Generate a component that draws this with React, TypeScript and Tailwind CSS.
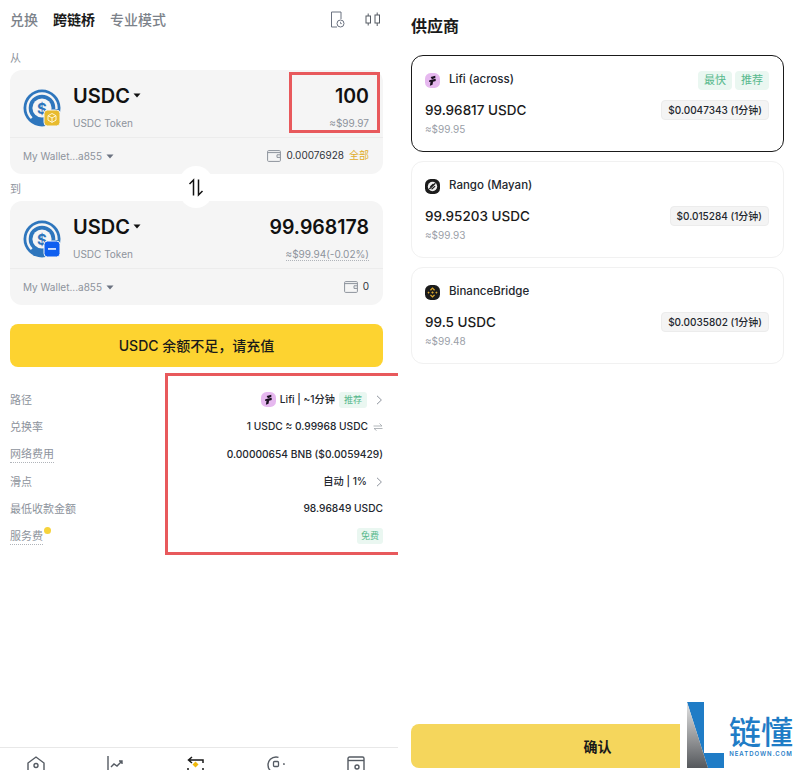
import React from "react";

const font = { fontFamily: '"Inter","Noto Sans CJK SC",sans-serif' };

function Usdc({ kind }: { kind: "bnb" | "base" }) {
  return (
    <svg width="40" height="40" viewBox="0 0 40 40" className="shrink-0">
      <circle cx="19" cy="19" r="18.5" fill="#2e76bd" />
      <circle cx="19" cy="19" r="14.5" fill="none" stroke="#f5f5f5" strokeWidth="2.4" strokeDasharray="58 33" strokeDashoffset="-34" />
      <circle cx="19" cy="19" r="9.6" fill="#f5f5f5" />
      <text x="19" y="24.5" textAnchor="middle" fontSize="15" fontWeight="700" fill="#2e76bd" fontFamily="Inter">$</text>
      {kind === "bnb" ? (
        <g>
          <rect x="21" y="21" width="16" height="16" rx="3.5" fill="#e8bb2e" stroke="#f5f5f5" strokeWidth="1" />
          <path d="M29 24.5l4 2.2v4.4l-4 2.3-4-2.3v-4.4zM25 26.7l4 2.2 4-2.2M29 28.9v4.5" fill="none" stroke="#fff6d6" strokeWidth="1" />
        </g>
      ) : (
        <g>
          <rect x="21" y="21" width="16" height="16" rx="3.5" fill="#0f5ff0" stroke="#f5f5f5" strokeWidth="1" />
          <rect x="25" y="28.2" width="8" height="1.5" fill="#fff" />
        </g>
      )}
    </svg>
  );
}

function Wallet() {
  return (
    <svg width="14" height="12" viewBox="0 0 14 12" className="shrink-0">
      <rect x="0.6" y="0.6" width="12.8" height="10.8" rx="1" fill="none" stroke="#8d939c" strokeWidth="1" />
      <path d="M0.6 2.6h12.8M13.4 4.8h-3.4v2.6h3.4" fill="none" stroke="#8d939c" strokeWidth="1" />
    </svg>
  );
}

function Caret({ size = "small" }: { size?: "small" | "big" }) {
  return size === "big" ? (
    <svg width="8" height="5" viewBox="0 0 8 5" className="ml-[3px] mb-0.5"><path d="M0.5 0.5h7L4 4.5z" fill="#111" /></svg>
  ) : (
    <svg width="8" height="5" viewBox="0 0 8 5" className="ml-1"><path d="M0.5 0.5h7L4 4.5z" fill="#6b7280" /></svg>
  );
}

function Lifi({ size = 15 }: { size?: number }) {
  return (
    <svg width={size} height={size} viewBox="0 0 16 16" className="shrink-0">
      <rect width="16" height="16" rx="6" fill="#e6b8ef" />
      <path d="M6 4.2l5-1.4v2.6L7.4 6.6zM4.6 7.6L11.4 6v2.4L8.6 9.3 8 12.6l-2.8.9.7-4.3-1.6.4z" fill="#1a1020" />
    </svg>
  );
}

function Rango() {
  return (
    <svg width="15" height="15" viewBox="0 0 16 16" className="shrink-0">
      <rect width="16" height="16" rx="6" fill="#1b1b1b" />
      <circle cx="8" cy="8" r="5" fill="#eee" />
      <path d="M4.600 10.600L11 4.600M5.600 8.400L9 5.300M7 11l3.800-3.400" stroke="#1b1b1b" strokeWidth="1.300" />
    </svg>
  );
}

function Binance() {
  return (
    <svg width="15" height="15" viewBox="0 0 16 16" className="shrink-0">
      <rect width="16" height="16" rx="6" fill="#1b1b1b" />
      <path d="M8 2.300l2.700 2.700-1 1L8 4.300 6.300 6l-1-1zM2.600 8l1.200-1.200L5 8 3.800 9.200zM11 8l1.200-1.200L13.400 8l-1.200 1.200zM8 13.700L5.300 11l1-1L8 11.700 9.700 10l1 1zM6.600 8L8 6.600 9.400 8 8 9.400z" fill="#d9a62e" />
    </svg>
  );
}

function Chevron() {
  return (
    <svg width="7" height="10" viewBox="0 0 7 10" className="shrink-0 ml-[9px]">
      <path d="M1 0.8L5.400 5 1 9.200" fill="none" stroke="#8d939c" strokeWidth="1" />
    </svg>
  );
}

function TokenCard({ kind, amount, fiat, balance, all, dashed }: { kind: "bnb" | "base"; amount: string; fiat: string; balance: string; all?: boolean; dashed?: boolean }) {
  return (
    <div className="h-[104px] bg-[#f5f5f5] rounded-xl flex flex-col">
      <div className="h-[68px] border-b border-[#ececec] flex items-start pl-[13px] pr-[14px]">
        <div className="mt-[19px]"><Usdc kind={kind} /></div>
        <div className="ml-[10px] mt-[14px]">
          <div className="flex items-center h-[24px] text-[20px] leading-[24px] font-semibold text-[#111]">USDC<Caret size="big" /></div>
          <div className="mt-[8px] text-[10px] leading-[14px] text-[#8d939c]">USDC Token</div>
        </div>
        <div className="ml-auto mt-[14px] text-right">
          <div className="h-[24px] text-[19.500px] leading-[24px] font-semibold text-[#111]">{amount}</div>
          <div className="mt-[8px] text-[10px] leading-[14px] text-[#8d939c]">
            {dashed ? <span className="border-b border-dotted border-[#b0b4ba]">{fiat}</span> : fiat}
          </div>
        </div>
      </div>
      <div className="flex-1 flex items-center pl-[13px] pr-[14px]">
        <div className="flex items-center text-[10px] text-[#8d939c] mt-[1px]">My Wallet...a855<Caret /></div>
        <div className="ml-auto flex items-center gap-[5px] text-[10px] text-[#30343a] -mt-[1px]">
          <Wallet />
          <span>{balance}</span>
          {all && <span className="text-[#e0ad2b]">全部</span>}
        </div>
      </div>
    </div>
  );
}

function Row({ label, dotted, dot, children }: { label: string; dotted?: boolean; dot?: boolean; children: React.ReactNode }) {
  return (
    <div className="h-[27.3px] flex items-center justify-between">
      <div className="relative text-[11px] leading-[14px] text-[#8d939c]">
        <span className={dotted ? "border-b border-dotted border-[#b0b4ba] pb-[1px]" : ""}>{label}</span>
        {dot && <span className="absolute -right-[8px] -top-[2px] w-[7px] h-[7px] rounded-full bg-[#f6d33c]" />}
      </div>
      <div className="flex items-center text-[10.200px] font-medium text-[#23272e]">{children}</div>
    </div>
  );
}

function Tag({ children }: { children: React.ReactNode }) {
  return <span className="h-[19px] px-[6px] rounded-[4px] bg-[#eaf7f1] text-[#58b98d] text-[11px] leading-[19px]">{children}</span>;
}

function Provider({ logo, name, amount, fiat, fee, tags, active }: { logo: React.ReactNode; name: string; amount: string; fiat: string; fee: string; tags?: boolean; active?: boolean }) {
  return (
    <div className={`h-[96.500px] rounded-xl pl-[13px] pr-[14px] pt-[14px] ${active ? "border-[1.5px] border-[#1a1a1a]" : "border border-[#f1f1f1]"}`}>
      <div className="h-[20px] flex items-center">
        {logo}
        <span className="ml-[9px] text-[11.500px] font-medium text-[#23272e]">{name}</span>
        {tags && <div className="ml-auto flex gap-[3px]"><Tag>最快</Tag><Tag>推荐</Tag></div>}
      </div>
      <div className="mt-[10px] h-[20px] flex items-center justify-between">
        <span className="text-[13.500px] font-medium text-[#1a1a1a]">{amount}</span>
        <span className="h-[20px] px-[6px] rounded-[4px] bg-[#f4f4f4] border border-[#ececec] text-[10px] leading-[18px] font-medium text-[#23272e]">{fee}</span>
      </div>
      <div className="mt-[2px] text-[10px] leading-[14px] text-[#9aa0a8]">{fiat}</div>
    </div>
  );
}

function Nav() {
  const c = "#555b63";
  return (
    <div className="mt-auto h-[23px] border-t border-[#e8e8e8] flex justify-between pl-[27px] pr-[33px] pt-[8px] overflow-hidden">
      <svg width="18" height="22" viewBox="0 0 18 22"><path d="M1 7l8-6 8 6v13H1z" fill="none" stroke={c} strokeWidth="1.400" /><circle cx="9" cy="9.500" r="2" fill="none" stroke={c} strokeWidth="1.400" /></svg>
      <svg width="18" height="22" viewBox="0 0 18 22"><path d="M1 0v20M4 11l3-3 3 2 5-5M12 5h3v3" fill="none" stroke={c} strokeWidth="1.400" /></svg>
      <svg width="18" height="22" viewBox="0 0 18 22"><path d="M5 1L1.500 4 5 7M2 4h14v3M13 20h-11v-3" fill="none" stroke="#1a1a1a" strokeWidth="1.500" /><path d="M8.500 5.500l3 3-3 3-3-3z" fill="#f0b90b" /><path d="M1 12v3M16 12v3" stroke="#1a1a1a" strokeWidth="1.500" /></svg>
      <svg width="18" height="22" viewBox="0 0 18 22"><circle cx="9" cy="9" r="8" fill="none" stroke={c} strokeWidth="1.400" strokeDasharray="34 8" strokeDashoffset="-6" /><rect x="6.500" y="5.500" width="5" height="5" rx="1" fill="none" stroke={c} strokeWidth="1.300" /></svg>
      <svg width="18" height="22" viewBox="0 0 18 22"><rect x="1" y="1" width="16" height="20" rx="1.500" fill="none" stroke={c} strokeWidth="1.400" /><path d="M1 4.500h16" stroke={c} strokeWidth="1.400" /><circle cx="10" cy="11" r="2" fill="none" stroke={c} strokeWidth="1.400" /></svg>
    </div>
  );
}

export default function App() {
  return (
    <div className="relative w-[800px] h-[770px] overflow-hidden bg-white flex" style={font}>
      <div className="relative w-[398px] h-[770px] flex flex-col">
        <div className="pl-[10px] pr-[15px] flex-1">
          <div className="h-[39px] flex items-center gap-[15px] text-[14px] font-medium text-[#7c828a]">
            <span>兑换</span>
            <span className="font-bold text-[#1a1a1a]">跨链桥</span>
            <span>专业模式</span>
            <div className="ml-auto flex items-center gap-[20px] pr-[2px]">
              <svg width="15" height="17" viewBox="0 0 15 17"><path d="M7 16H1.500V1H11V8" fill="none" stroke="#6b7280" strokeWidth="1" /><circle cx="10.500" cy="12.500" r="3.500" fill="none" stroke="#6b7280" strokeWidth="1" /><path d="M10.500 10.800v1.800h1.400" fill="none" stroke="#6b7280" strokeWidth="0.800" /></svg>
              <svg width="16" height="15" viewBox="0 0 16 15"><rect x="1" y="4" width="4.500" height="7" fill="none" stroke="#555b63" /><rect x="10" y="3" width="4.500" height="8" fill="none" stroke="#555b63" /><path d="M3.200 1.500V4M3.200 11v2.500M12.200 0.500V3M12.200 11v3" stroke="#555b63" /></svg>
            </div>
          </div>
          <div className="mt-[12px] h-[19px] text-[11px] leading-[14px] text-[#8d939c]">从</div>
          <TokenCard kind="bnb" amount="100" fiat="≈$99.97" balance="0.00076928" all />
          <div className="relative h-[27px] text-[11px] leading-[30px] text-[#8d939c]">
            到
            <div className="absolute left-[169px] -top-[8px] w-[34px] h-[42px] rounded-full bg-white flex items-center justify-center">
              <svg width="18" height="19" viewBox="0 0 18 18"><path d="M6.500 17V1.500L2.500 5.500" fill="none" stroke="#111" strokeWidth="1.500" /><path d="M11.500 1V16.500L15.500 12.500" fill="none" stroke="#111" strokeWidth="1.500" /></svg>
            </div>
          </div>
          <TokenCard kind="base" amount="99.968178" fiat="≈$99.94(-0.02%)" balance="0" dashed />
          <button className="mt-[19px] w-full h-[43px] rounded-lg bg-[#fdd330] text-[14px] font-medium text-[#1a1a1a]">USDC 余额不足，请充值</button>
          <div className="mt-[19px]">
            <Row label="路径">
              <Lifi />
              <span className="ml-[4px]">Lifi | ~1分钟</span>
              <span className="ml-[4px] h-[16px] px-[5px] rounded-[3px] bg-[#eaf7f1] text-[#58b98d] text-[9px] leading-[16px] font-normal">推荐</span>
              <Chevron />
            </Row>
            <Row label="兑换率">
              1 USDC ≈ 0.99968 USDC
              <svg width="10" height="8" viewBox="0 0 10 8" className="ml-[5px]"><path d="M0.500 3h8.500L6.500 0.500M9.500 5.500H1L3.500 7.500" fill="none" stroke="#a0a4aa" strokeWidth="0.800" /></svg>
            </Row>
            <Row label="网络费用" dotted>0.00000654 BNB ($0.0059429)</Row>
            <Row label="滑点">自动 | 1%<Chevron /></Row>
            <Row label="最低收款金额">98.96849 USDC</Row>
            <Row label="服务费" dotted dot>
              <span className="h-[16px] px-[4px] rounded-[3px] bg-[#eaf7f1] text-[#58b98d] text-[9px] leading-[16px] font-normal">免费</span>
            </Row>
          </div>
        </div>
        <Nav />
        <div className="absolute left-[289px] top-[72px] w-[91px] h-[61px] border-[3px] border-[#e8595c]" />
        <div className="absolute left-[165px] top-[373px] w-[233px] h-[182px] border-[3px] border-r-0 border-[#e8595c]" />
      </div>

      <div className="flex-1 pl-[13px] pr-[16px] flex flex-col">
        <div className="h-[55px] pb-[4px] flex items-center text-[16px] font-semibold text-[#1a1a1a]">供应商</div>
        <div className="flex flex-col gap-[9.500px]">
          <Provider active tags logo={<Lifi />} name="Lifi (across)" amount="99.96817 USDC" fiat="≈$99.95" fee="$0.0047343 (1分钟)" />
          <Provider logo={<Rango />} name="Rango (Mayan)" amount="99.95203 USDC" fiat="≈$99.93" fee="$0.015284 (1分钟)" />
          <Provider logo={<Binance />} name="BinanceBridge" amount="99.5 USDC" fiat="≈$99.48" fee="$0.0035802 (1分钟)" />
        </div>
        <button className="mt-auto mb-[2px] h-[44px] rounded-lg bg-[#f5d65c] text-[14px] font-semibold text-[#1a1a1a]">确认</button>
      </div>

      <div className="absolute right-0 bottom-0 w-[120px] h-[70px] bg-white flex">
        <svg width="38" height="68" viewBox="0 0 38 68" className="ml-[7px] shrink-0 mt-[1px]">
          <defs>
            <linearGradient id="lg" x1="0" y1="0" x2="0" y2="1"><stop offset="0" stopColor="#e4e4e4" /><stop offset="1" stopColor="#55585c" /></linearGradient>
          </defs>
          <path d="M0 1H17V52H37V67H21z" fill="#1f7cc6" />
          <path d="M0 1L21 67H0z" fill="url(#lg)" />
        </svg>
        <div className="ml-[4px] mt-[11px] text-center">
          <div className="text-[32px] leading-[38px] font-medium text-[#1f7cc6] whitespace-nowrap" style={{ fontFamily: '"Noto Sans CJK SC",sans-serif' }}>链懂</div>
          <div className="text-[6px] leading-[9px] font-semibold tracking-[1px] text-[#1f7cc6] whitespace-nowrap">NEATDOWN.COM</div>
        </div>
      </div>
    </div>
  );
}
